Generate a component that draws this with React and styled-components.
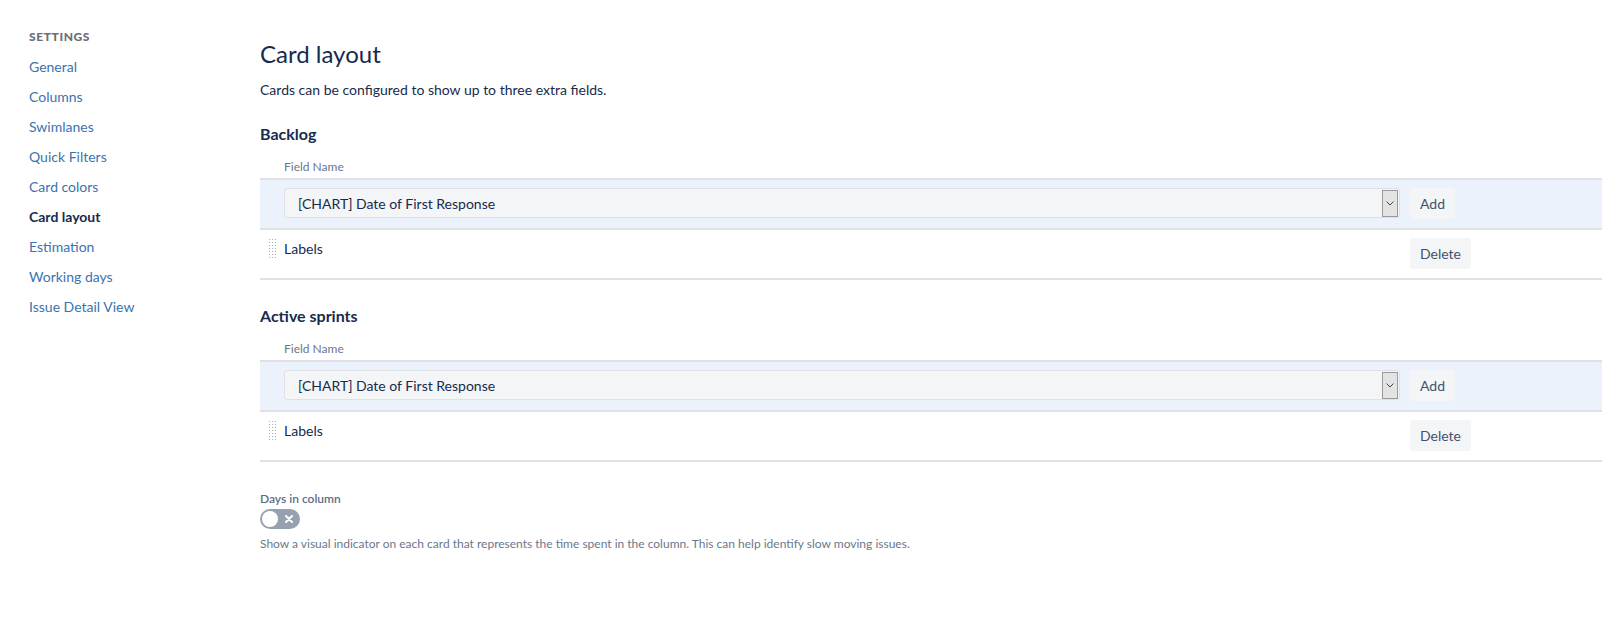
import styled, { createGlobalStyle } from 'styled-components'

const GlobalStyle = createGlobalStyle`
  html, body {
    margin: 0;
    padding: 0;
    background: #FFFFFF;
    font-family: Lato, "Open Sans", sans-serif;
    color: #172b4d;
  }
`

const Page = styled.div`
  display: flex;
  min-height: 617px;
`

const Sidebar = styled.nav`
  width: 231px;
  padding: 22px 0 0 29px;
  display: flex;
  flex-direction: column;
`

const SideHeading = styled.div`
  font-size: 12px;
  font-weight: 900;
  letter-spacing: 0.6px;
  color: #6b6e76;
  line-height: 30px;
  text-transform: uppercase;
`

const NavLink = styled.a`
  font-size: 14px;
  line-height: 30px;
  color: ${(props) => (props.active ? '#172b4d' : '#3b73af')};
  font-weight: ${(props) => (props.active ? 700 : 400)};
  text-decoration: none;
  cursor: pointer;
`

const Main = styled.main`
  flex: 1;
  padding: 38px 17px 0 0;
`

const Title = styled.h1`
  margin: 0;
  font-size: 24px;
  line-height: 32px;
  font-weight: 400;
  color: #172b4d;
`

const Intro = styled.p`
  margin: 10px 0 0;
  font-size: 14px;
  line-height: 20px;
`

const SectionTitle = styled.h2`
  margin: ${(props) => props.top}px 0 0;
  font-size: 16px;
  line-height: 24px;
  font-weight: 700;
`

const ColumnLabel = styled.div`
  margin: 13px 0 3px;
  padding-left: 24px;
  font-size: 12px;
  line-height: 16px;
  color: #6b778c;
`

const Table = styled.div`
  border-top: 2px solid #dfe1e6;
`

const Row = styled.div`
  display: grid;
  grid-template-columns: 24px 1fr 202px;
  padding: 8px 0 9px;
  background: ${(props) => (props.highlight ? '#ebf2fc' : '#FFFFFF')};
  border-bottom: 2px solid #dfe1e6;
`

const Handle = styled.span`
  width: 9px;
  height: 22px;
  margin-left: 8px;
  background-image: radial-gradient(circle, #a5adba 0.9px, transparent 1px);
  background-size: 3px 3px;
`

const FieldText = styled.span`
  font-size: 14px;
  line-height: 22px;
`

const Select = styled.div`
  height: 30px;
  box-sizing: border-box;
  display: flex;
  align-items: center;
  justify-content: space-between;
  padding: 0 1px 0 13px;
  background: #f4f5f7;
  border: 1px solid #dfe1e6;
  border-radius: 3px;
  font-size: 14px;
`

const Arrow = styled.span`
  width: 16px;
  height: 27px;
  box-sizing: border-box;
  display: flex;
  align-items: center;
  justify-content: center;
  background: #e3e3e3;
  border: 1px solid #9a9a9a;
`

const Actions = styled.div`
  padding-left: 10px;
`

const Button = styled.button`
  height: 31px;
  padding: 0 10px;
  border: none;
  border-radius: 3px;
  background: #f4f5f7;
  color: #42526e;
  font-family: inherit;
  font-size: 14px;
  cursor: pointer;
`

const ToggleLabel = styled.div`
  margin-top: 29px;
  font-size: 12px;
  line-height: 16px;
  font-weight: 600;
  color: #5e6c84;
`

const Toggle = styled.span`
  margin-top: 2px;
  width: 40px;
  height: 20px;
  border-radius: 10px;
  background: #97a0af;
  display: flex;
  align-items: center;
  justify-content: space-between;
  padding: 0 7px 0 2px;
  box-sizing: border-box;
`

const Knob = styled.span`
  width: 16px;
  height: 16px;
  border-radius: 50%;
  background: #FFFFFF;
`

const Help = styled.div`
  margin-top: 7px;
  font-size: 12px;
  line-height: 16px;
  color: #6b778c;
`

const navItems = [
  'General',
  'Columns',
  'Swimlanes',
  'Quick Filters',
  'Card colors',
  'Card layout',
  'Estimation',
  'Working days',
  'Issue Detail View',
]

const Chevron = () => (
  <svg width="8" height="5" viewBox="0 0 8 5">
    <path d="M0.5 0.5 L4 4 L7.5 0.5" fill="none" stroke="#444" strokeWidth="1" />
  </svg>
)

const Cross = () => (
  <svg width="8" height="8" viewBox="0 0 8 8">
    <path d="M1 1 L7 7 M7 1 L1 7" stroke="#FFFFFF" strokeWidth="2" strokeLinecap="round" />
  </svg>
)

const FieldTable = () => (
  <Table>
    <Row highlight>
      <span />
      <Select>
        <span>[CHART] Date of First Response</span>
        <Arrow><Chevron /></Arrow>
      </Select>
      <Actions><Button>Add</Button></Actions>
    </Row>
    <Row>
      <Handle />
      <FieldText>Labels</FieldText>
      <Actions><Button>Delete</Button></Actions>
    </Row>
  </Table>
)

const App = () => {
  return (
    <Page>
      <GlobalStyle />
      <Sidebar>
        <SideHeading>Settings</SideHeading>
        {navItems.map((item) => (
          <NavLink key={item} active={item === 'Card layout'}>{item}</NavLink>
        ))}
      </Sidebar>
      <Main>
        <Title>Card layout</Title>
        <Intro>Cards can be configured to show up to three extra fields.</Intro>
        <SectionTitle top={22}>Backlog</SectionTitle>
        <ColumnLabel>Field Name</ColumnLabel>
        <FieldTable />
        <SectionTitle top={24}>Active sprints</SectionTitle>
        <ColumnLabel>Field Name</ColumnLabel>
        <FieldTable />
        <ToggleLabel>Days in column</ToggleLabel>
        <Toggle><Knob /><Cross /></Toggle>
        <Help>Show a visual indicator on each card that represents the time spent in the column. This can help identify slow moving issues.</Help>
      </Main>
    </Page>
  )
}

export default App
